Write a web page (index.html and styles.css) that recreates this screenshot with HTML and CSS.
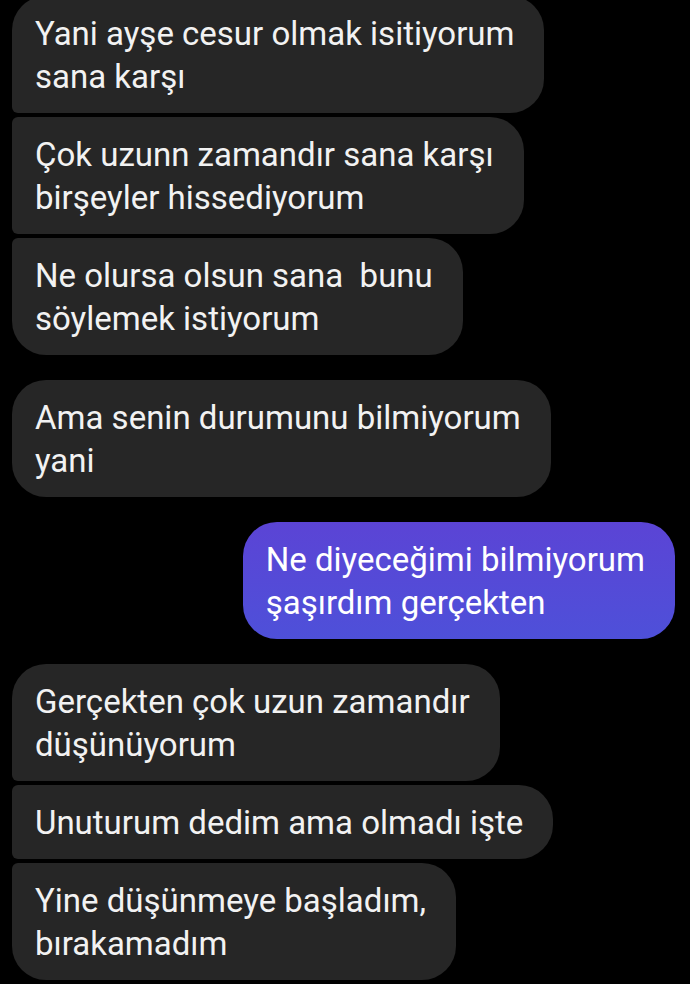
FILE: index.html
```
<!DOCTYPE html>
<html lang="tr">
<head>
<meta charset="utf-8">
<link rel="stylesheet" href="styles.css">
</head>
<body>
<div class="chat">
  <div class="group in">
    <div class="msg first">Yani ayşe cesur olmak isitiyorum<br>sana karşı</div>
    <div class="msg mid">Çok uzunn zamandır sana karşı<br>birşeyler hissediyorum</div>
    <div class="msg last">Ne olursa olsun sana&nbsp; bunu<br>söylemek istiyorum</div>
  </div>
  <div class="group in">
    <div class="msg single">Ama senin durumunu bilmiyorum<br>yani</div>
  </div>
  <div class="group out">
    <div class="msg single mine">Ne diyeceğimi bilmiyorum<br>şaşırdım gerçekten</div>
  </div>
  <div class="group in">
    <div class="msg first">Gerçekten çok uzun zamandır<br>düşünüyorum</div>
    <div class="msg mid">Unuturum dedim ama olmadı işte</div>
    <div class="msg last">Yine düşünmeye başladım,<br>bırakamadım</div>
  </div>
</div>
</body>
</html>
```

FILE: styles.css
```
html, body {
  margin: 0;
  padding: 0;
  background: #000;
}
body {
  overflow: hidden;
}
.chat {
  display: flex;
  flex-direction: column;
  gap: 25px;
  padding: 0 15px 0 12px;
  margin-top: -4px;
  font-family: Roboto, "Noto Sans", sans-serif;
  font-size: 33px;
  line-height: 43px;
  color: #f2f2f2;
}
.group {
  display: flex;
  flex-direction: column;
  gap: 4px;
}
.group.in { align-items: flex-start; }
.group.out { align-items: flex-end; }
.msg {
  background: #262626;
  padding: 15.5px 30px 15.5px 23px;
  border-radius: 34px;
  white-space: nowrap;
}
.group.in .msg.first { border-bottom-left-radius: 6px; }
.group.in .msg.mid { border-top-left-radius: 6px; border-bottom-left-radius: 6px; }
.group.in .msg.last { border-top-left-radius: 6px; }
.msg.mine {
  background: linear-gradient(180deg, #5b44d5 0%, #4e50d9 100%);
  color: #fff;
}
```
